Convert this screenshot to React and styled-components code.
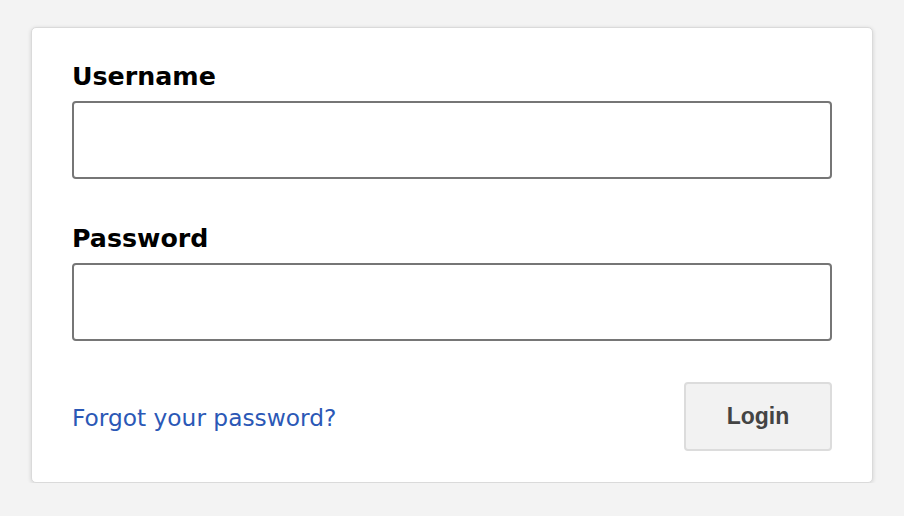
import React from 'react';
import styled, { createGlobalStyle } from 'styled-components';

const GlobalStyle = createGlobalStyle`
    html, body {
        margin: 0;
        padding: 0;
        background: #f3f3f3;
    }
    body {
        font-family: "DejaVu Sans", Verdana, sans-serif;
    }
`;

const Page = styled.div`
    padding: 27px 0 0 31px;
`;

const Card = styled.form`
    box-sizing: border-box;
    width: 842px;
    height: 456px;
    background: #fff;
    border: 1px solid #dadada;
    border-radius: 5px;
    box-shadow: 0 1px 4px rgba(0, 0, 0, 0.14);
    padding: 34px 40px 31px;
    display: flex;
    flex-direction: column;
`;

const Field = styled.div`
    display: flex;
    flex-direction: column;
    gap: 10px;
    margin-bottom: ${p => p.$last ? '41px' : '45px'};
`;

const Label = styled.label`
    font-size: 25.3px;
    font-weight: bold;
    color: #000;
    line-height: 29px;
`;

const Input = styled.input`
    box-sizing: border-box;
    width: 760px;
    height: 78px;
    border: 2px solid #767676;
    border-radius: 4px;
    background: #fff;
    font-size: 22px;
    padding: 0 12px;
    outline: none;
`;

const Footer = styled.div`
    display: flex;
    align-items: center;
    justify-content: space-between;
`;

const Link = styled.a`
    color: #2b58b6;
    font-size: 23.3px;
    text-decoration: none;
    margin-top: 2px;
`;

const Button = styled.button`
    box-sizing: border-box;
    width: 148px;
    height: 69px;
    background: #f2f2f2;
    border: 2px solid #dcdcdc;
    border-radius: 4px;
    color: #444;
    font-family: "Liberation Sans", Arial, sans-serif;
    font-weight: bold;
    font-size: 23px;
`;

function App() {
    return (
        <Page>
            <GlobalStyle />
            <Card onSubmit={e => e.preventDefault()}>
                <Field>
                    <Label htmlFor="username">Username</Label>
                    <Input id="username" type="text" />
                </Field>
                <Field $last>
                    <Label htmlFor="password">Password</Label>
                    <Input id="password" type="password" />
                </Field>
                <Footer>
                    <Link href="#">Forgot your password?</Link>
                    <Button type="submit">Login</Button>
                </Footer>
            </Card>
        </Page>
    );
}

export default App;
